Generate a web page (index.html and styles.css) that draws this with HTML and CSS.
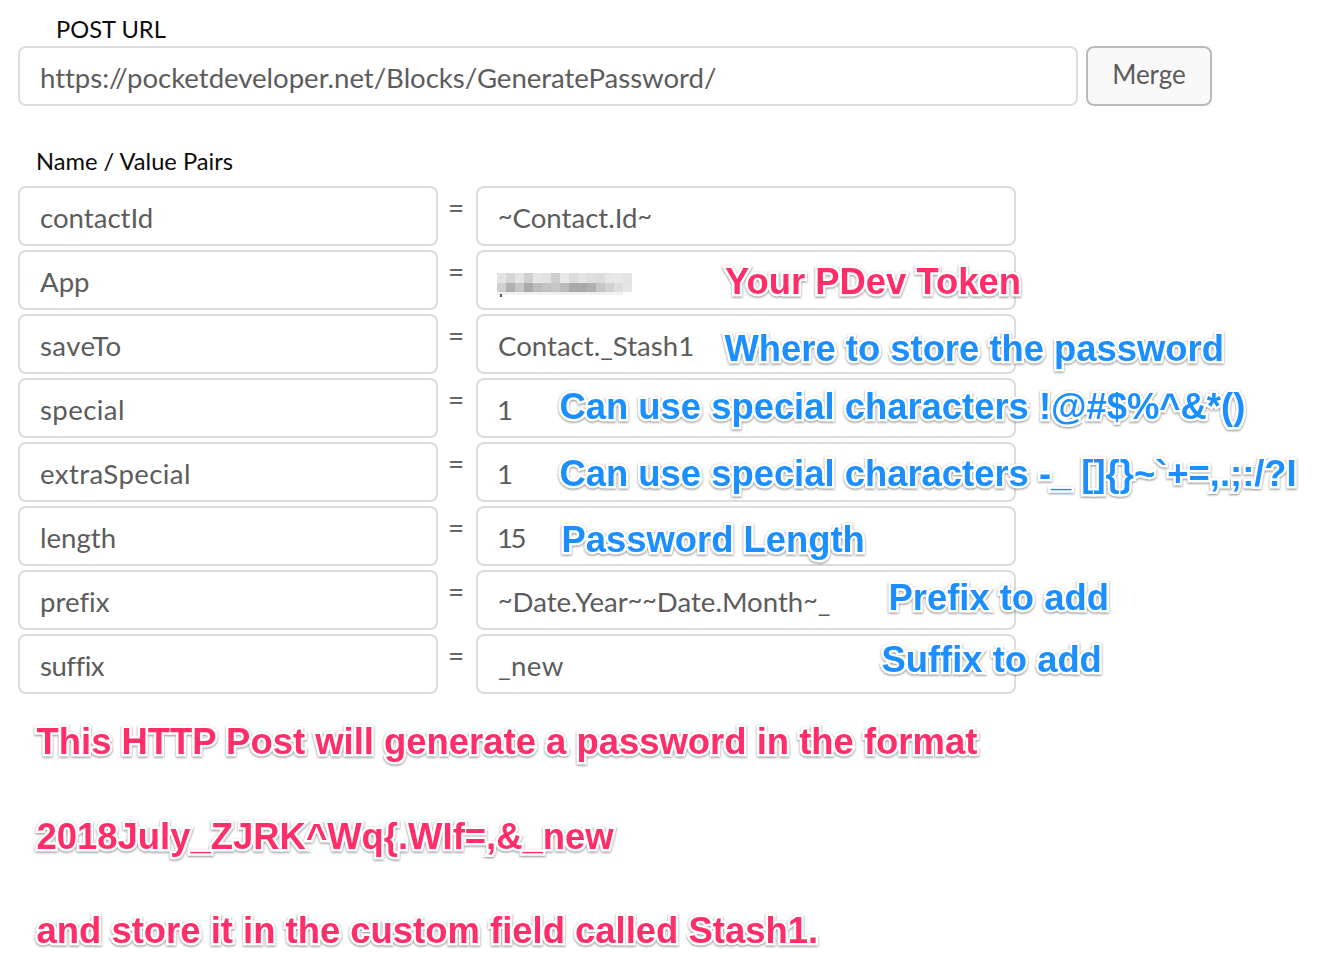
FILE: index.html
```html
<!DOCTYPE html>
<html lang="en">
<head>
<meta charset="utf-8">
<title>POST URL</title>
<link rel="stylesheet" href="styles.css">
</head>
<body>
<main class="page">
  <div class="label label-url">POST URL</div>
  <div class="url-row">
    <div class="field url-field">https://pocketdeveloper.net/Blocks/GeneratePassword/</div>
    <div class="merge">Merge</div>
  </div>
  <div class="label label-pairs">Name / Value Pairs</div>
  <div class="pairs">
    <div class="pair"><div class="field name">contactId</div><span class="eq">=</span><div class="field value"><span class="tilde">~</span>Contact.Id<span class="tilde">~</span></div></div>
    <div class="pair"><div class="field name">App</div><span class="eq">=</span><div class="field value">
      <svg class="token" width="140" height="24" viewBox="0 0 140 24" aria-hidden="true">
        <g fill="#e2e2e2">
          <rect x="0" y="0" width="9" height="10" fill="#e4e4e4"/><rect x="9" y="0" width="9" height="10" fill="#d6d6d6"/><rect x="18" y="0" width="9" height="10" fill="#e4e4e4"/><rect x="27" y="0" width="9" height="10" fill="#cfcfcf"/><rect x="36" y="0" width="9" height="10" fill="#e6e6e6"/><rect x="45" y="0" width="9" height="10" fill="#e2e2e2"/><rect x="54" y="0" width="9" height="10" fill="#cdcdcd"/><rect x="63" y="0" width="9" height="10" fill="#e8e8e8"/><rect x="72" y="0" width="9" height="10" fill="#dcdcdc"/><rect x="81" y="0" width="9" height="10" fill="#e2e2e2"/><rect x="90" y="0" width="9" height="10" fill="#dedede"/><rect x="99" y="0" width="9" height="10" fill="#dcdcdc"/><rect x="108" y="0" width="9" height="10" fill="#e6e6e6"/><rect x="117" y="0" width="9" height="10" fill="#e8e8e8"/><rect x="126" y="0" width="9" height="10" fill="#e4e4e4"/>
        </g>
        <g>
          <rect x="0" y="10" width="9" height="9" fill="#cfcfcf"/><rect x="9" y="10" width="9" height="9" fill="#b0b0b0"/><rect x="18" y="10" width="9" height="9" fill="#c6c6c6"/><rect x="27" y="10" width="9" height="9" fill="#a9a9a9"/><rect x="36" y="10" width="9" height="9" fill="#bcbcbc"/><rect x="45" y="10" width="9" height="9" fill="#c2c2c2"/><rect x="54" y="10" width="9" height="9" fill="#c6c6c6"/><rect x="63" y="10" width="9" height="9" fill="#bcbcbc"/><rect x="72" y="10" width="9" height="9" fill="#a9a9a9"/><rect x="81" y="10" width="9" height="9" fill="#a9a9a9"/><rect x="90" y="10" width="9" height="9" fill="#b0b0b0"/><rect x="99" y="10" width="9" height="9" fill="#c6c6c6"/><rect x="108" y="10" width="9" height="9" fill="#cdd2d6"/><rect x="117" y="10" width="9" height="9" fill="#dcdcdc"/><rect x="126" y="10" width="9" height="9" fill="#e6e6e6"/>
        </g>
        <rect x="0" y="19" width="126" height="3" fill="#f1f1f1"/>
        <rect x="3" y="21" width="2" height="3" fill="#555"/>
      </svg>
    </div><span class="note pink n-token">Your PDev Token</span></div>
    <div class="pair"><div class="field name wide">saveTo</div><span class="eq">=</span><div class="field value">Contact._Stash1</div><span class="note blue n-store">Where to store the password</span></div>
    <div class="pair"><div class="field name wide">special</div><span class="eq">=</span><div class="field value"><span class="digits">1</span></div><span class="note blue n-sp1">Can use special characters !@#$%^&amp;*()</span></div>
    <div class="pair"><div class="field name wide">extraSpecial</div><span class="eq">=</span><div class="field value"><span class="digits">1</span></div><span class="note blue n-sp2">Can use special characters -_ []{}~`+=,.;:/?I</span></div>
    <div class="pair"><div class="field name">length</div><span class="eq">=</span><div class="field value"><span class="digits">15</span></div><span class="note blue n-len">Password Length</span></div>
    <div class="pair"><div class="field name">prefix</div><span class="eq">=</span><div class="field value"><span class="tilde">~</span>Date.Year<span class="tilde">~~</span>Date.Month<span class="tilde">~</span>_</div><span class="note blue n-pre">Prefix to add</span></div>
    <div class="pair"><div class="field name tight">suffix</div><span class="eq">=</span><div class="field value wide">_new</div><span class="note blue n-suf">Suffix to add</span></div>
  </div>
  <div class="summary">
    <p class="pink">This HTTP Post will generate a password in the format</p>
    <p class="pink">2018July_ZJRK^Wq{.WIf=,&amp;_new</p>
    <p class="pink">and store it in the custom field called Stash1.</p>
  </div>
</main>
</body>
</html>
```
FILE: styles.css
```css
* { box-sizing: border-box; }
html, body { margin: 0; background: #fff; }
body { height: 962px; overflow: hidden; font-family: "Lato", "Liberation Sans", sans-serif; font-variant-ligatures: none; }
.page { padding: 0 0 0 18px; }
.label { color: #0b0b0b; font-size: 23.7px; line-height: 28px; }
.label-url { padding: 15px 0 0 38px; height: 46px; }
.label-pairs { padding: 0 0 0 18px; height: 38px; margin-top: 42px; line-height: 26px; }
.url-row { display: flex; gap: 8px; }
.field {
  height: 60px;
  border: 2px solid #dcdcdc;
  border-radius: 8px;
  background: #fff;
  color: #5c5c5c;
  font-size: 27.6px;
  line-height: 60px;
  padding: 0 0 0 20px;
  white-space: nowrap;
}
.url-field { width: 1060px; letter-spacing: -0.04px; }
.merge {
  width: 126px;
  height: 60px;
  border: 2px solid #bababa;
  border-radius: 8px;
  background: #f9f9f9;
  color: #5c5c5c;
  font-size: 26px;
  line-height: 52px;
  text-align: center;
}
.pairs { display: flex; flex-direction: column; gap: 4px; }
.pair { display: flex; align-items: flex-start; position: relative; }
.name { width: 420px; }
.value { width: 540px; }
.wide { letter-spacing: 0.4px; }
.tight { letter-spacing: -0.5px; }
.tilde { font-size: 25px; line-height: 1; vertical-align: 3px; }
.digits { letter-spacing: -2.4px; margin-left: -1px; }
.eq { width: 38px; padding-right: 2px; text-align: center; color: #666; font-size: 28px; line-height: 42px; }
.token { display: block; margin: 21px 0 0 -1px; }
.note, .summary p {
  font-family: "Liberation Sans", Arial, sans-serif;
  font-weight: 700;
  -webkit-text-stroke: 5px #fff;
  paint-order: stroke fill;
  filter: drop-shadow(0 1.5px 1px rgba(0, 0, 0, 0.45));
  white-space: nowrap;
}
.pink { color: #ff2e69; }
.blue { color: #1b8fff; }
.note { position: absolute; font-size: 36.4px; line-height: 42px; }
.n-token { left: 707px; top: 11px; }
.n-store { left: 706.5px; top: 14px; }
.n-sp1 { left: 541.5px; top: 8px; }
.n-sp2 { left: 541.5px; top: 11px; }
.n-len { left: 543.5px; top: 13px; }
.n-pre { left: 870.5px; top: 7px; }
.n-suf { left: 863.5px; top: 5px; }
.summary { padding: 27px 0 0 18.5px; }
.summary p { margin: 0 0 52.5px; font-size: 36.45px; line-height: 42px; }
```
